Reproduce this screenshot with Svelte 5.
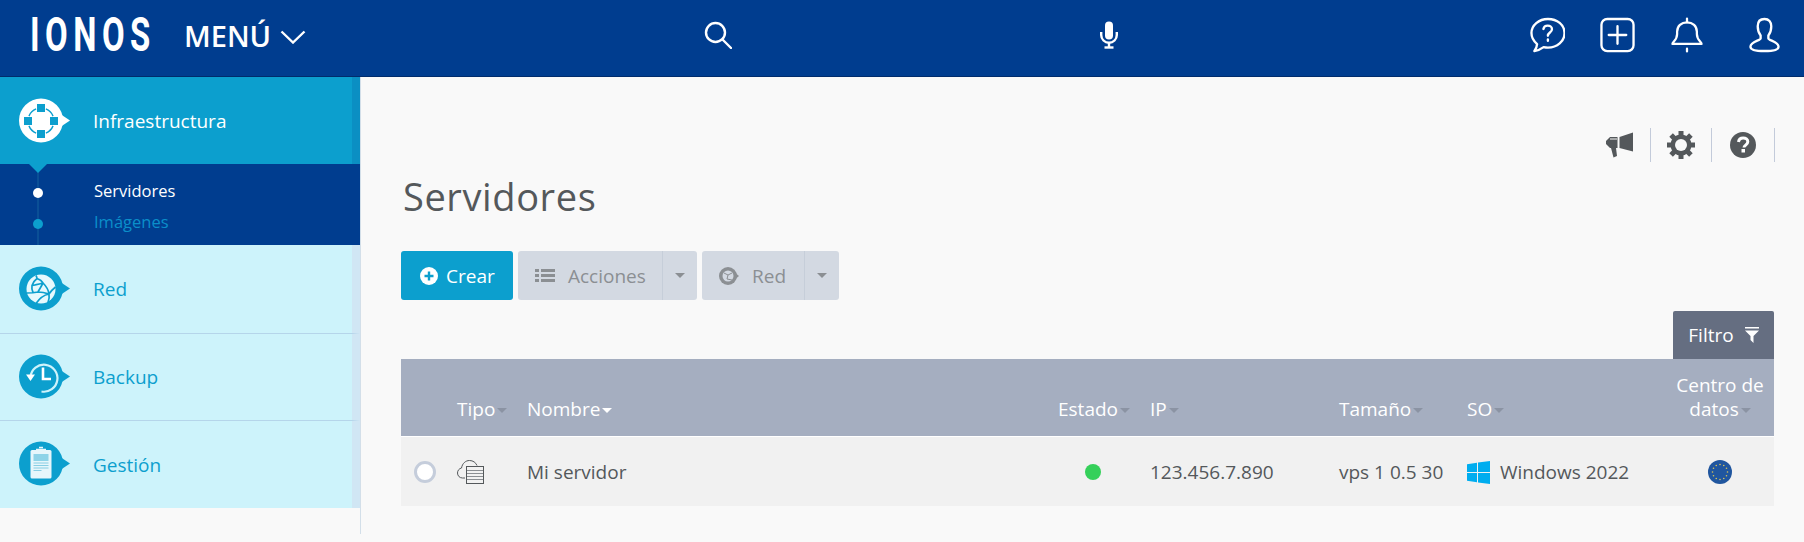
<script>
	const columns = [
		{ key: 'select', label: '', width: 49 },
		{ key: 'tipo', label: 'Tipo', width: 70, sortable: true },
		{ key: 'nombre', label: 'Nombre', width: 531, sortable: true, active: true },
		{ key: 'estado', label: 'Estado', width: 92, sortable: true },
		{ key: 'ip', label: 'IP', width: 189, sortable: true },
		{ key: 'size', label: 'Tamaño', width: 128, sortable: true },
		{ key: 'so', label: 'SO', width: 206, sortable: true }
	];

	// stars of the EU flag
	const stars = Array.from({ length: 12 }, (_, i) => {
		const a = (i * Math.PI) / 6;
		return { x: 12 + Math.cos(a) * 7.5, y: 12 + Math.sin(a) * 7.5 };
	});

	// ring segments between the four squares of the infrastructure icon
	const arcs = [0, 90, 180, 270].map((start) => {
		const from = ((start + 22) * Math.PI) / 180;
		const to = ((start + 68) * Math.PI) / 180;
		const p = (a) => `${(22 + Math.cos(a) * 13).toFixed(2)} ${(23 + Math.sin(a) * 13).toFixed(2)}`;
		return `M${p(from)}A13 13 0 0 1 ${p(to)}`;
	});
</script>

<div class="page">
	<header class="topbar">
		<div class="logo"><span>IONOS</span></div>
		<button class="menu" type="button">
			MENÚ
			<svg viewBox="0 0 26 14" aria-hidden="true"><path d="M1.5 1.5 13 12.500 24.500 1.500" /></svg>
		</button>
		<svg class="top-icon search" viewBox="0 0 28 28" aria-hidden="true">
			<circle cx="11.500" cy="11.500" r="9.500" />
			<path d="M18.500 18.500 27 27" />
		</svg>
		<svg class="mic" viewBox="0 0 18 28" aria-hidden="true">
			<rect class="solid" x="5" y="0.500" width="8" height="18" rx="4" />
			<path d="M1.200 11v3a7.800 7.800 0 0 0 15.600 0v-3M9 22v4" />
			<path d="M4.500 26.500h9" />
		</svg>
		<div class="top-actions">
			<svg class="top-icon chat" viewBox="0 0 36 36" aria-hidden="true">
				<path d="M18.500 1.500C9 1.500 1.500 8 1.500 16c0 4.600 2.400 8.500 5.800 11.300-.2 2.700-1.400 5.400-2.800 7.200 3.500-.5 6.800-2 9.500-4 1.400.3 3 .5 4.500.5 9.500 0 17-6.500 17-15S28 1.500 18.500 1.500Z" />
				<path d="M13.800 11.800c.4-2.200 2.200-3.400 4.400-3.400 2.500 0 4.400 1.500 4.400 3.700 0 3.400-4.200 3.300-4.200 6.700" />
				<path d="M18.400 22.500v1.500" />
			</svg>
			<svg class="top-icon plus" viewBox="0 0 36 36" aria-hidden="true">
				<rect x="1.500" y="1.500" width="33" height="33" rx="6" />
				<path d="M18 9v18M9 18h18" />
			</svg>
			<svg class="top-icon bell" viewBox="0 0 34 36" aria-hidden="true">
				<path d="M1.500 27.500h31c0-2.500-5-3.500-5-10.500v-2.500C27.500 8.500 23 4.500 17 4.500S6.500 8.500 6.500 14.500V17c0 7-5 8-5 10.500Z" />
				<path d="M17 .5v4M17 32.500v3" />
			</svg>
			<svg class="top-icon user" viewBox="0 0 32 36" aria-hidden="true">
				<path d="M16 1.500c-4.500 0-7 3-7 7.500 0 4 1 7 3 9.500v3c0 2-10.500 3.500-10.500 8.500 0 3 6 4.500 14.500 4.500s14.500-1.500 14.500-4.500c0-5-10.500-6.500-10.500-8.500v-3c2-2.500 3-5.500 3-9.500 0-4.500-2.500-7.500-7-7.500Z" />
			</svg>
		</div>
	</header>

	<div class="content">
		<nav class="sidebar">
			<div class="nav-item current">
				<svg class="bubble" viewBox="0 0 51 45" aria-hidden="true">
					<circle cx="22" cy="22.500" r="22" fill="#fff" />
					<path d="M42 16.500 51 22.500 42 28.500Z" fill="#fff" />
					<g fill="#0c9fce">
						<rect x="18" y="6" width="8" height="8" />
						<rect x="18" y="32" width="8" height="8" />
						<rect x="5" y="19" width="8" height="8" />
						<rect x="31" y="19" width="8" height="8" />
					</g>
					{#each arcs as d}
						<path {d} fill="none" stroke="#0c9fce" stroke-width="1.400" />
					{/each}
				</svg>
				<span>Infraestructura</span>
			</div>
			<ul class="subnav">
				<li class="selected">Servidores</li>
				<li>Imágenes</li>
			</ul>
			<div class="nav-item">
				<svg class="bubble" viewBox="0 0 51 45" aria-hidden="true">
					<circle cx="22" cy="22.500" r="22" fill="#0c9fce" />
					<path d="M42 16.500 51 22.500 42 28.500Z" fill="#0c9fce" />
					<circle cx="22" cy="23" r="14.500" fill="#e6f9fd" />
					<path
						d="M17 9.500c.5 1 1 2 1 3 3 1 5 2.500 6 4.500M18 12.500c-2 1.500-4 4-5 7M13 19.500c3-.5 7-1.500 11-2.500M24 17c-2 4-4 7-5 9M24 17c3 3 5.500 7 6 11M30 28c2-3 4-5 6.500-7M7.500 27c2.500 0 7 0 11.500-1M13 19.500c-.5 3 0 5 1 7M19 26c4 0 8 1 11 2M30 28c-5 1-10 5-13 9.500M30 28c.5 3 0 6-1 8.500"
						fill="none"
						stroke="#0c9fce"
						stroke-width="1.700"
					/>
				</svg>
				<span>Red</span>
			</div>
			<div class="nav-item">
				<svg class="bubble" viewBox="0 0 51 45" aria-hidden="true">
					<circle cx="22" cy="22.500" r="22" fill="#0c9fce" />
					<path d="M42 16.500 51 22.500 42 28.500Z" fill="#0c9fce" />
					<path d="M11.500 23a13.500 13.500 0 1 1 11 14.500" fill="none" stroke="#cdf3fb" stroke-width="2.200" />
					<path d="M7 20.500h9L11.500 27Z" fill="#fff" />
					<path d="M24 13.500V25h8" fill="none" stroke="#fff" stroke-width="2.600" />
				</svg>
				<span>Backup</span>
			</div>
			<div class="nav-item">
				<svg class="bubble" viewBox="0 0 51 45" aria-hidden="true">
					<circle cx="22" cy="22.500" r="22" fill="#0c9fce" />
					<path d="M42 16.500 51 22.500 42 28.500Z" fill="#0c9fce" />
					<rect x="11.500" y="9" width="21" height="28.500" rx="1.500" fill="#e6f6fb" />
					<path d="M17 8.500h10M20 6.500h4" stroke="#e6f6fb" stroke-width="1.500" />
					<rect x="14.500" y="13" width="15" height="7" fill="#8ed3e8" />
					<path d="M14.500 22h15M14.500 24.500h15M14.500 27h15M14.500 29.500h8" stroke="#70c4de" stroke-width=".8" />
				</svg>
				<span>Gestión</span>
			</div>
		</nav>

		<main class="main">
			<div class="tools">
				<span class="tool">
					<svg viewBox="0 0 28 26" width="28" height="26" aria-hidden="true">
						<path d="M13.500 5 27 .5v19L13.500 16Z" fill="#54585b" />
						<path d="M0 9 4 5h7.500v11H10l1 8-3.500 1.500L5 16H4L0 12Z" fill="#54585b" />
						<path d="M4 7h7" stroke="#f9f9f9" />
					</svg>
				</span>
				<span class="tool">
					<svg viewBox="0 0 28 28" width="28" height="28" aria-hidden="true">
						<g fill="#54585b">
							<circle cx="14" cy="14" r="10.500" />
							{#each [0, 45, 90, 135, 180, 225, 270, 315] as a}
								<rect x="11.500" y="0" width="5" height="5" transform="rotate({a} 14 14)" />
							{/each}
						</g>
						<circle cx="14" cy="14" r="6" fill="#f9f9f9" />
					</svg>
				</span>
				<span class="tool last">
					<svg viewBox="0 0 26 26" width="26" height="26" aria-hidden="true">
						<circle cx="13" cy="13" r="13" fill="#54585b" />
						<path d="M8.500 10c.3-2.500 2.200-4 4.700-4 2.600 0 4.600 1.500 4.600 3.800 0 3.200-3.800 3.300-3.800 5.700" fill="none" stroke="#fff" stroke-width="3" />
						<rect x="11.500" y="17" width="3.500" height="3.500" fill="#fff" />
					</svg>
				</span>
			</div>

			<h1>Servidores</h1>

			<div class="actions">
				<button class="btn primary" type="button">
					<svg viewBox="0 0 18 18" width="18" height="18" aria-hidden="true">
						<circle cx="9" cy="9" r="9" fill="#fff" />
						<path d="M9 4.500v9M4.500 9h9" stroke="#0c9fce" stroke-width="2.400" />
					</svg>
					Crear
				</button>
				<div class="btn-group acciones">
					<button class="btn" type="button">
						<svg viewBox="0 0 20 15" width="20" height="15" aria-hidden="true">
							<path d="M0 1h4v3H0zM6 1h14v3H6zM0 6h4v3H0zM6 6h14v3H6zM0 11h4v3H0zM6 11h14v3H6z" fill="#8b8f93" />
						</svg>
						Acciones
					</button>
					<button class="caret-btn" type="button" aria-label="Más acciones"><i class="caret"></i></button>
				</div>
				<div class="btn-group red">
					<button class="btn" type="button">
						<svg viewBox="0 0 20 18" width="20" height="18" aria-hidden="true">
							<circle cx="9" cy="9" r="9" fill="#8b8f93" />
							<path d="M17 6.500 20 9l-3 2.500Z" fill="#8b8f93" />
							<circle cx="9" cy="9" r="5.500" fill="#d3d9e2" />
							<path d="M5 6 9 8l-1 4M9 8l4-2M8 12l5 1" stroke="#8b8f93" fill="none" />
						</svg>
						Red
					</button>
					<button class="caret-btn" type="button" aria-label="Más redes"><i class="caret"></i></button>
				</div>
			</div>

			<div class="filter-row">
				<button class="filter" type="button">
					Filtro
					<svg viewBox="0 0 14 16" width="14" height="16" aria-hidden="true">
						<path d="M0 0h14v1.500H0zM0 3.500h14L8.500 9v7L5.500 13V9Z" fill="#fff" />
					</svg>
				</button>
			</div>

			<table>
				<colgroup>
					{#each columns as col}
						<col style="width: {col.width}px" />
					{/each}
					<col />
				</colgroup>
				<thead>
					<tr>
						{#each columns as col}
							<th>
								{col.label}{#if col.sortable}<i class="sort" class:active={col.active}></i>{/if}
							</th>
						{/each}
						<th class="center">Centro de<br />datos<i class="sort"></i></th>
					</tr>
				</thead>
				<tbody>
					<tr>
						<td><span class="radio"></span></td>
						<td>
							<svg class="cell-icon" viewBox="0 0 27 24" width="27" height="24" aria-hidden="true">
								<path d="M8 18H5.500C2.500 18 .5 15.700.5 13c0-2.500 1.700-4.500 4-5C5.300 3.500 8.500.5 12.500.5c3.500 0 6.300 2 7.500 5" fill="none" stroke="#54585b" />
								<rect x="9.500" y="6.500" width="17" height="17" fill="#f1f1f1" stroke="#54585b" />
								<path d="M10 10.500h16M10 13.500h16M10 16.500h16M10 19.500h16" stroke="#8b8f93" />
							</svg>
						</td>
						<td>Mi servidor</td>
						<td><span class="status"></span></td>
						<td>123.456.7.890</td>
						<td>vps 1 0.5 30</td>
						<td>
							<span class="os">
								<svg viewBox="0 0 23 23" width="23" height="23" aria-hidden="true">
									<path d="M0 3.200 10 1.700V11H0zM11 1.500 23 0v11H11zM0 12h10v9.300L0 19.800zM11 12h12v11l-12-1.500z" fill="#00adef" />
								</svg>
								Windows 2022
							</span>
						</td>
						<td class="center">
							<svg class="cell-icon" viewBox="0 0 24 24" width="24" height="24" aria-hidden="true">
								<circle cx="12" cy="12" r="12" fill="#20569f" />
								{#each stars as s}
									<circle cx={s.x} cy={s.y} r="0.8" fill="#d8c25a" />
								{/each}
							</svg>
						</td>
					</tr>
				</tbody>
			</table>
		</main>
	</div>
</div>

<style>
	:global(body) {
		background: #f9f9f9;
		font-family: 'Open Sans', sans-serif;
	}

	button {
		font: inherit;
		border: 0;
		cursor: pointer;
	}

	.page {
		height: 542px;
		overflow: hidden;
		display: flex;
		flex-direction: column;
	}

	.topbar {
		display: flex;
		align-items: center;
		height: 77px;
		box-sizing: border-box;
		padding-bottom: 6px;
		background: #003d8f;
		border-bottom: 1px solid #002c6c;
		color: #fff;
		flex-shrink: 0;
	}

	.logo {
		width: 154px;
		margin-left: 30px;
	}

	.logo span {
		display: inline-block;
		font-family: Roboto, sans-serif;
		font-weight: 700;
		font-size: 48px;
		line-height: 1;
		letter-spacing: 8px;
		transform: scaleX(0.685);
		transform-origin: left center;
		white-space: nowrap;
	}

	.menu {
		display: flex;
		align-items: center;
		gap: 9px;
		padding: 0;
		background: none;
		color: #fff;
		font-size: 29px;
		font-weight: 600;
		width: 520px;
	}

	.menu svg {
		width: 26px;
		height: 14px;
		fill: none;
		stroke: #fff;
		stroke-width: 2.400;
		margin-top: 4px;
	}

	.top-icon {
		height: 36px;
		fill: none;
		stroke: #fff;
		stroke-width: 2.400;
		stroke-linecap: round;
		stroke-linejoin: round;
	}

	.top-icon.search {
		width: 28px;
		height: 28px;
		margin-right: 368px;
	}

	.chat,
	.plus {
		width: 35px;
	}

	.bell {
		width: 32px;
		margin-left: 36px;
	}

	.user {
		width: 31px;
		margin-left: 46px;
	}

	.plus {
		margin-left: 35px;
	}

	.mic {
		width: 18px;
		height: 28px;
		fill: none;
		stroke: #fff;
		stroke-width: 2.400;
	}

	.mic .solid {
		fill: #fff;
		stroke: none;
	}

	.top-actions {
		display: flex;
		align-items: center;
		margin-left: auto;
		margin-right: 24px;
	}

	.content {
		display: flex;
		flex: 1;
		min-height: 0;
	}

	.sidebar {
		width: 361px;
		height: 457px;
		box-sizing: border-box;
		border-right: 1px solid #d3dfe9;
		flex-shrink: 0;
	}

	.nav-item {
		display: flex;
		align-items: center;
		height: 87px;
		box-sizing: border-box;
		padding-left: 19px;
		background: #cdf3fb;
		border-right: 8px solid #d0e6f4;
		border-bottom: 1px solid #b5d5ea;
		color: #0c9fce;
		font-size: 19px;
	}

	.subnav + .nav-item {
		height: 89px;
	}

	.nav-item:last-child {
		border-bottom: 0;
	}

	.nav-item span {
		margin-left: 23px;
	}

	.nav-item .bubble {
		width: 51px;
		height: 45px;
		margin-bottom: 2px;
		flex-shrink: 0;
	}

	.nav-item.current {
		position: relative;
		background: #0c9fce;
		border-right-color: #0b8fc3;
		border-bottom: 0;
		color: #fff;
	}

	.nav-item.current .bubble {
		margin-bottom: 0;
	}

	.nav-item.current::after {
		content: '';
		position: absolute;
		left: 29px;
		top: 100%;
		border: 9px solid transparent;
		border-top-color: #0c9fce;
		border-bottom: 0;
		z-index: 1;
	}

	.subnav {
		position: relative;
		list-style: none;
		margin: 0;
		padding: 11px 0 0;
		height: 81px;
		box-sizing: border-box;
		background: #003d8f;
		color: #0b8fca;
		font-size: 16.500px;
		line-height: 31px;
	}

	.subnav::before {
		content: '';
		position: absolute;
		left: 37px;
		top: 0;
		bottom: 0;
		width: 2px;
		background: #0a4f96;
	}

	.subnav li {
		position: relative;
		padding-left: 94px;
	}

	.subnav li::before {
		content: '';
		position: absolute;
		left: 33px;
		top: 13px;
		width: 10px;
		height: 10px;
		border-radius: 50%;
		background: #0c9fce;
	}

	.subnav li.selected {
		color: #fff;
	}

	.subnav li.selected::before {
		background: #fff;
	}

	.main {
		flex: 1;
		min-width: 0;
		padding: 51px 30px 0 40px;
	}

	.tools {
		display: flex;
		justify-content: flex-end;
		height: 34px;
		margin-right: -1px;
	}

	.tool {
		display: flex;
		align-items: center;
		justify-content: center;
		padding: 0 16px;
		border-right: 1px solid #c3cbda;
	}

	.tool.last {
		padding: 0 18px;
	}

	h1 {
		margin: 0 0 0 2px;
		height: 55px;
		font-size: 38px;
		font-weight: 400;
		line-height: 68px;
		letter-spacing: 0.600px;
		color: #54585b;
	}

	.actions {
		display: flex;
		gap: 5px;
		height: 49px;
		margin-top: 34px;
		font-size: 19px;
	}

	.btn-group {
		display: flex;
		border-radius: 3px;
		background: #d3d9e2;
	}

	.acciones {
		width: 179px;
	}

	.red {
		width: 137px;
	}

	.btn {
		display: flex;
		align-items: center;
		gap: 13px;
		flex: 1;
		padding: 0 0 0 17px;
		background: none;
		color: #8b8f93;
		white-space: nowrap;
	}

	.btn.primary {
		flex: none;
		width: 112px;
		box-sizing: border-box;
		gap: 8px;
		padding-left: 19px;
		background: #0c9fce;
		color: #fff;
		border-radius: 3px;
	}

	.caret-btn {
		display: flex;
		align-items: center;
		justify-content: center;
		width: 35px;
		padding: 0;
		background: none;
		border-left: 1px solid #c6ced9;
	}

	.caret {
		border: 5px solid transparent;
		border-top-color: #8b8f93;
		border-bottom: 0;
	}

	.filter-row {
		display: flex;
		justify-content: flex-end;
		margin-top: 11px;
	}

	.filter {
		display: flex;
		align-items: center;
		justify-content: center;
		gap: 11px;
		width: 101px;
		height: 48px;
		padding: 0;
		background: #656e81;
		color: #fff;
		font-size: 19px;
		border-radius: 2px 2px 0 0;
	}

	table {
		width: 100%;
		table-layout: fixed;
		border-collapse: collapse;
		font-size: 19px;
	}

	th {
		height: 77px;
		box-sizing: border-box;
		padding: 0 0 15px 7px;
		background: #a5aec0;
		color: #fff;
		font-weight: 400;
		text-align: left;
		vertical-align: bottom;
		line-height: 24px;
		white-space: nowrap;
	}

	td {
		height: 70px;
		box-sizing: border-box;
		padding: 2px 0 0 7px;
		background: #f1f1f1;
		color: #54585b;
		border-top: 1px solid #fff;
		white-space: nowrap;
	}

	th.center,
	td.center {
		text-align: center;
		padding-left: 0;
	}

	.sort {
		display: inline-block;
		margin-left: 2px;
		vertical-align: middle;
		border: 5px solid transparent;
		border-top-color: #8b93a3;
		border-bottom: 0;
	}

	.sort.active {
		border-top-color: #fff;
	}

	.radio {
		display: block;
		width: 16px;
		height: 16px;
		margin-left: 6px;
		border: 3px solid #c5cddb;
		border-radius: 50%;
		background: #fff;
	}

	.cell-icon {
		display: block;
	}

	td.center .cell-icon {
		margin: 0 auto;
	}

	.status {
		display: block;
		width: 16px;
		height: 16px;
		margin-left: 27px;
		border-radius: 50%;
		background: #35d05a;
	}

	.os {
		display: flex;
		align-items: center;
		gap: 10px;
	}
</style>
